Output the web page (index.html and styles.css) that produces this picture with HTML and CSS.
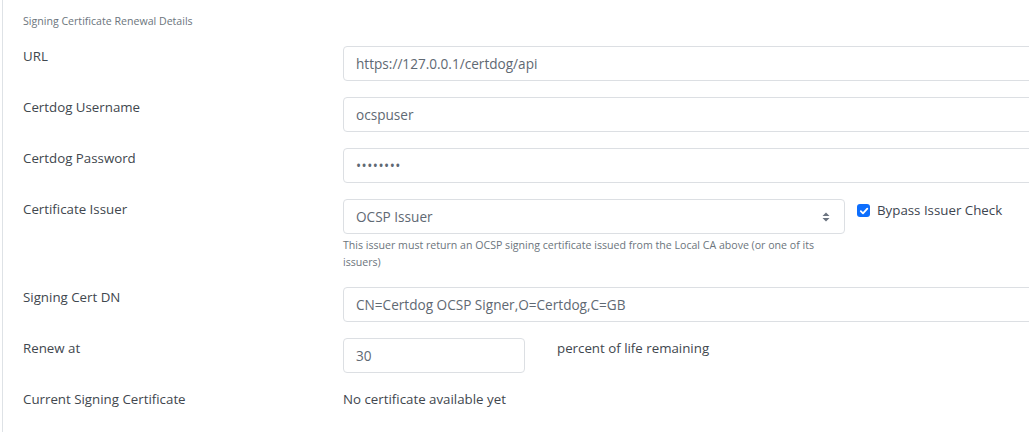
FILE: index.html
```html
<!DOCTYPE html>
<html>
<head>
<meta charset="utf-8">
<link rel="stylesheet" href="styles.css">
</head>
<body>
<fieldset class="panel">
  <legend class="panel-title">Signing Certificate Renewal Details</legend>

  <div class="row">
    <label class="lbl">URL</label>
    <div class="field span2"><input class="ctl" type="text" value="https://127.0.0.1/certdog/api"></div>
  </div>

  <div class="row">
    <label class="lbl">Certdog Username</label>
    <div class="field span2"><input class="ctl" type="text" value="ocspuser"></div>
  </div>

  <div class="row">
    <label class="lbl">Certdog Password</label>
    <div class="field span2"><input class="ctl pw" type="password" value="password"></div>
  </div>

  <div class="row">
    <label class="lbl">Certificate Issuer</label>
    <div class="field">
      <div class="select ctl">
        <span>OCSP Issuer</span>
        <svg class="caret" width="8" height="12" viewBox="0 0 8 12"><path d="M4 1.5 L7.5 5 H0.5 Z M4 10.5 L7.5 7 H0.5 Z" fill="#6b7480"/></svg>
      </div>
      <div class="help">This issuer must return an OCSP signing certificate issued from the Local CA above (or one of its issuers)</div>
    </div>
    <div class="check">
      <span class="box"><svg width="10" height="10" viewBox="0 0 10 10"><path d="M1.8 5.2 L4 7.4 L8.3 2.6" fill="none" stroke="#fff" stroke-width="1.8" stroke-linecap="round" stroke-linejoin="round"/></svg></span>
      <span class="check-lbl">Bypass Issuer Check</span>
    </div>
  </div>

  <div class="row">
    <label class="lbl">Signing Cert DN</label>
    <div class="field span2"><input class="ctl" type="text" value="CN=Certdog OCSP Signer,O=Certdog,C=GB"></div>
  </div>

  <div class="row">
    <label class="lbl">Renew at</label>
    <div class="field renew">
      <input class="ctl short" type="text" value="30">
      <span class="suffix">percent of life remaining</span>
    </div>
  </div>

  <div class="row last">
    <label class="lbl">Current Signing Certificate</label>
    <div class="field plain">No certificate available yet</div>
  </div>
</fieldset>
</body>
</html>
```

FILE: styles.css
```css
html, body {
  margin: 0;
  padding: 0;
  overflow: hidden;
  background: #fff;
}

body {
  font-family: "Open Sans", "Noto Sans", sans-serif;
  font-size: 13.3px;
  line-height: 21px;
  color: #41474e;
  width: 1029px;
  height: 432px;
}

.panel {
  margin: -20px 0 0 2px;
  padding: 0 0 0 20px;
  border: 0;
  border-left: 1px solid #dee2e6;
  width: 1140px;
  min-width: 0;
  height: 452px;
  box-sizing: border-box;
}

.panel-title {
  float: left;
  width: 100%;
  padding: 0;
  margin: 33px 0 17px;
  font-size: 10.6px;
  line-height: 16px;
  color: #6c757d;
}

.row {
  clear: both;
  display: grid;
  grid-template-columns: 308px 502px 1fr;
  column-gap: 12px;
  margin-bottom: 16px;
}

.row.last { margin-bottom: 0; }

.row > .lbl { grid-column: 1; }

.field { grid-column: 2; }
.field.span2 { grid-column: 2 / 4; }

.ctl {
  box-sizing: border-box;
  display: block;
  width: 100%;
  height: 35px;
  padding: 6px 12px;
  border: 1px solid #dcdfe3;
  border-radius: 4px;
  font: inherit;
  font-size: 13.6px;
  color: #5f6973;
  background: #fff;
  outline: none;
}

.pw { letter-spacing: 0.5px; }

.select {
  display: flex;
  align-items: center;
  justify-content: space-between;
}

.caret { margin-right: 2px; }

.help {
  margin-top: 3px;
  max-width: 480px;
  font-size: 10.6px;
  line-height: 17px;
  color: #6c757d;
}

.check {
  grid-column: 3;
  display: flex;
  align-items: flex-start;
  gap: 7px;
  padding-top: 1px;
}

.box {
  width: 13px;
  height: 13px;
  margin-top: 4px;
  border-radius: 3px;
  background: #0d6efd;
  display: flex;
  align-items: center;
  justify-content: center;
  flex: none;
}

.check-lbl { color: #3d4550; }

.renew {
  display: flex;
  align-items: flex-start;
  gap: 32px;
}

.ctl.short { width: 182px; flex: none; }

.plain { color: #41474e; }
```
